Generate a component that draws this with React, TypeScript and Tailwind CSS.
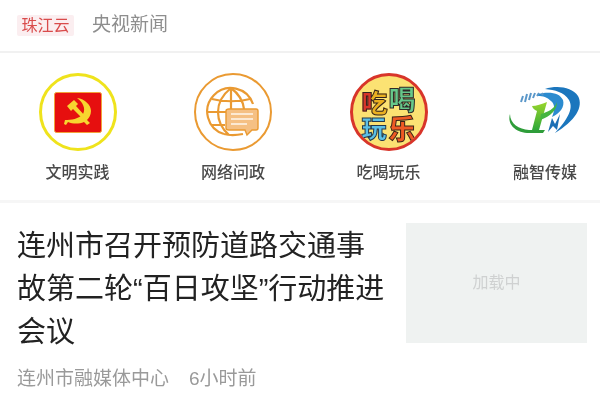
function PartyIcon() {
  return (
    <div className="flex h-[78px] w-[78px] items-center justify-center rounded-full border-[3px] border-[#efe31c] bg-white">
      <svg width="48" height="41" viewBox="0 0 48 41">
        <rect x="0.5" y="0.5" width="47" height="40" rx="2" fill="#e60f0f" stroke="#f2a23a" />
        <g fill="#f7d52f">
          <path d="M23 6 C31 7 37 13 37 19 C37 23 35 26 33 28 L36 31 L33 33 L30 30 C25 32 19 32 14 30 L12 33 L10 32 L11 28 C17 28 25 27 29 22 C32 17 29 10 23 6Z" />
          <path d="M13 14 L20 8 L24 12 L22 14 L32 25 L29 27 L19 17 L17 19Z" />
        </g>
      </svg>
    </div>
  );
}

function NetIcon() {
  return (
    <div className="flex h-[78px] w-[78px] items-center justify-center rounded-full border-[2.5px] border-[#ea9a32] bg-white">
      <svg width="56" height="56" viewBox="0 0 56 56" fill="none">
        <g stroke="#ea9a32" strokeWidth="2.2">
          <path d="M19 50 A23.5 23.5 0 1 1 48 20" />
          <path d="M26 4 V25 M7 15 C18 18 34 18 45 15 M3 28 H21 M7 41 H20 M26 4 C16 12 13 20 13 28 C13 36 16 44 24 51 M26 4 C34 10 38 17 39 25 M19 50 C26 52 33 51 38 50" />
        </g>
        <path d="M24 25 H51 Q53 25 53 27 V44 Q53 46 51 46 H47 L42 51 L40 46 H24 Q21 46 21 44 V27 Q21 25 24 25Z" fill="#f5c084" stroke="#ea9a32" strokeWidth="1.4" />
        <path d="M26 30 H48 M26 35 H48 M26 40 H42" stroke="#fce9d3" strokeWidth="1.8" />
      </svg>
    </div>
  );
}

function FunIcon() {
  return (
    <div className="relative h-[78px] w-[78px] overflow-hidden rounded-full border-[3px] border-[#d8352a] bg-[#fbe273] font-['Noto_Sans_CJK_SC',sans-serif] font-black leading-none">
      <span className="absolute left-[9px] top-[13px] bg-[linear-gradient(90deg,#d8352a_36%,#eab020_36%)] bg-clip-text text-[26px] text-transparent [-webkit-text-stroke:1px_#33241f]">吃</span>
      <span className="absolute left-[36px] top-[9px] text-[27px] text-[#66c88a] [-webkit-text-stroke:1px_#2f2a28]">喝</span>
      <span className="absolute left-[9px] top-[39px] text-[25px] text-[#5cc0e6] [-webkit-text-stroke:1px_#23384a]">玩</span>
      <span className="absolute left-[36px] top-[38px] text-[27px] text-[#ee5a24] [-webkit-text-stroke:1px_#3a2418]">乐</span>
    </div>
  );
}

function RzIcon() {
  return (
    <svg width="80" height="60" viewBox="0 0 80 60">
      <defs>
        <linearGradient id="rzg" x1="0" y1="0" x2="0" y2="1">
          <stop offset="0" stopColor="#9ad62c" />
          <stop offset="1" stopColor="#2fa83a" />
        </linearGradient>
      </defs>
      <path d="M40 7 C52 3 67 5 73 14 C79 25 70 39 50 51 C62 38 69 27 64 18 C59 10 50 8 40 7Z" fill="#1b76bd" />
      <path d="M33 12 C45 9 55 11 58 18 C60 25 55 31 47 35 C50 28 50 22 46 19 C42 15 38 14 33 14Z" fill="#2b8bcf" />
      <path d="M43 50 L47 36 L50 42 L55 32 L52 48 L48 44Z" fill="#1c6fb5" />
      <path d="M27 24 C31 24 37 22 42 20 L34 48 H27 L32 29 C30 28 28 27 27 24Z" fill="url(#rzg)" />
      <path d="M36 32 C42 30 50 27 52 20 C52 28 46 34 35 38Z" fill="#45b540" />
      <path d="M5 32 C5 42 14 47 24 48 L40 48 L38 51 L22 51 C10 50 2 42 5 32Z" fill="#2f9d3a" />
      <path d="M16 20 L18 14 M20 20 L22 12 M24 18 L26 11 M28 16 L30 11 M32 14 L34 11 M37 13 L38 11" stroke="#5a97c9" strokeWidth="2" />
    </svg>
  );
}

const items = [
  { label: "文明实践", icon: <PartyIcon /> },
  { label: "网络问政", icon: <NetIcon /> },
  { label: "吃喝玩乐", icon: <FunIcon /> },
  { label: "融智传媒", icon: <RzIcon /> },
];

export default function App() {
  return (
    <div className="flex h-[400px] w-[600px] flex-col overflow-hidden bg-white font-['Liberation_Sans','Noto_Sans_CJK_SC',sans-serif] blur-[0.5px]">
      <header className="flex h-[53px] shrink-0 items-center gap-[18px] border-b-2 border-[#f1f1f1] pl-[17px]">
        <span className="flex h-[21px] w-[57px] items-center justify-center rounded-[2px] bg-[#fbeef0] text-[16px] text-[#d94b4b]">珠江云</span>
        <span className="text-[19px] text-[#8e8e8e]">央视新闻</span>
      </header>

      <nav className="h-[150px] shrink-0 border-b-[3px] border-[#f6f6f6] pt-[20px]">
        <div className="grid w-[624px] grid-cols-[155px_156px_155px_158px]">
          {items.map((it) => (
            <div key={it.label} className="flex flex-col items-center">
              <div className="flex h-[78px] items-center justify-center">{it.icon}</div>
              <span className="mt-[10px] text-center text-[16px] font-medium leading-[24px] text-[#4a4a4a]">{it.label}</span>
            </div>
          ))}
        </div>
      </nav>

      <article className="flex flex-1 gap-[19px] pl-[17px] pr-[13px] pt-[20px]">
        <div className="w-[370px] shrink-0 pt-[2px]">
          <h1 className="text-[29px] font-normal leading-[43px] text-[#222222]">
            连州市召开预防道路交通事故第二轮“百日攻坚”行动推进会议
          </h1>
          <div className="mt-[13px] flex gap-[20px] text-[19px] leading-[24px] text-[#9a9a9a]">
            <span>连州市融媒体中心</span>
            <span>6小时前</span>
          </div>
        </div>
        <div className="flex h-[120px] w-[181px] items-center justify-center bg-[#eff2f1] text-[16px] text-[#cfd1d1]">
          加载中
        </div>
      </article>
    </div>
  );
}
